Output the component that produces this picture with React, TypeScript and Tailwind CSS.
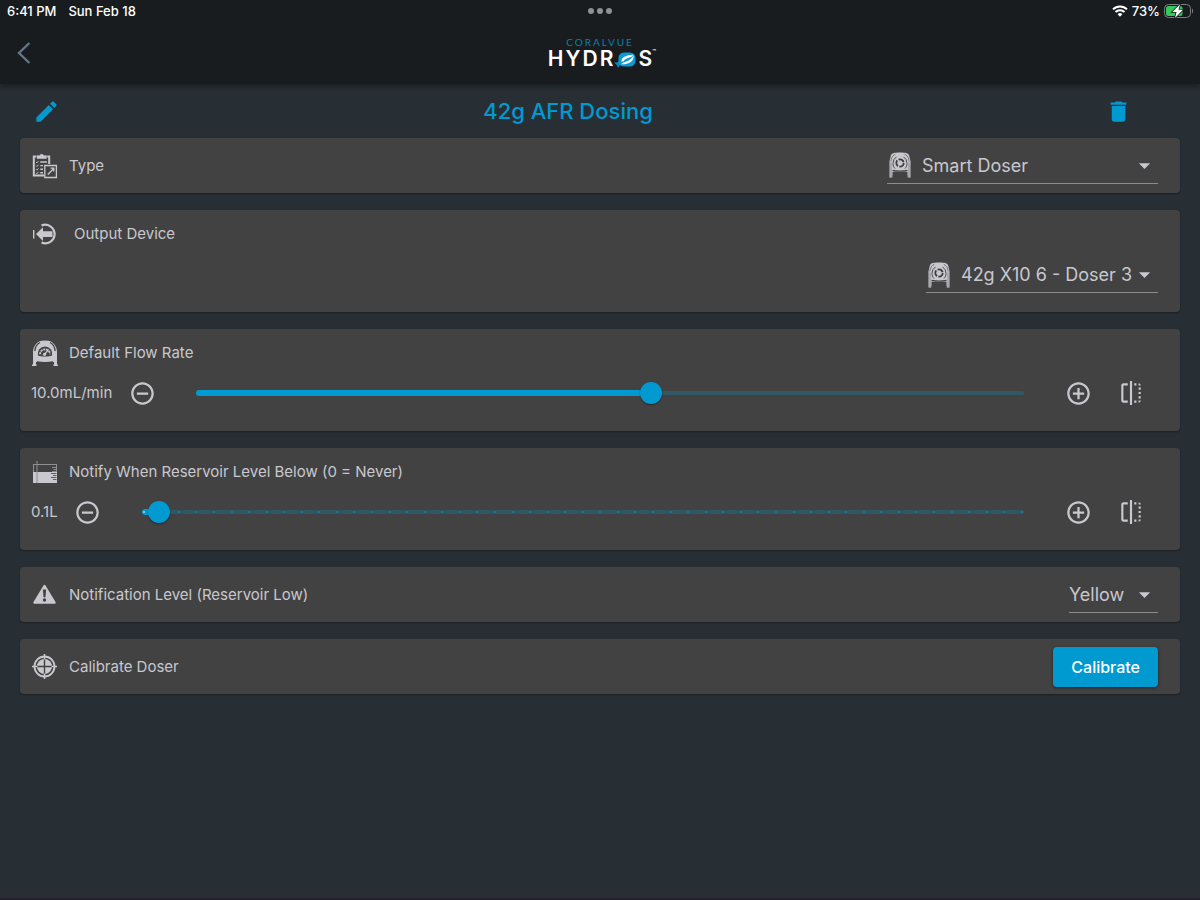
import React, { useId, useState } from 'react';
import {
  MdAddCircleOutline,
  MdArrowDropDown,
  MdDelete,
  MdEdit,
  MdFlip,
  MdRemoveCircleOutline,
} from 'react-icons/md';

function WifiIcon() {
  return (
    <svg width="16" height="12" viewBox="0 0 16 12" fill="none" stroke="#fff" strokeWidth="2">
      <path d="M1 4.4a10 10 0 0 1 14 0" />
      <path d="M3.5 7a6.4 6.4 0 0 1 9 0" />
      <path d="M8 11.8 5.6 9.3a3.4 3.4 0 0 1 4.8 0z" fill="#fff" stroke="none" />
    </svg>
  );
}

function BatteryIcon() {
  return (
    <svg width="30" height="14" viewBox="0 0 30 14" fill="none">
      <rect x="0.5" y="0.5" width="26" height="13" rx="4" stroke="#7b7f81" />
      <path d="M28 4.6c1.4.5 1.4 4.3 0 4.8z" fill="#7b7f81" />
      <rect x="2" y="2" width="16.5" height="10" rx="2.5" fill="#34c759" />
      <path
        d="M16 .3 8.300 8h4.200l-1.500 6 8-8.200h-4.500z"
        fill="#fff"
        stroke="#181c1e"
        strokeWidth="1.6"
        paintOrder="stroke"
      />
    </svg>
  );
}

function BackIcon() {
  return (
    <svg width="14" height="22" viewBox="0 0 14 22" fill="none" stroke="#64758b" strokeWidth="2.4">
      <path d="M12.4 1 2 11l10.4 10" />
    </svg>
  );
}

function ClipboardIcon() {
  return (
    <svg width="26" height="26" viewBox="0 0 26 26" fill="none" stroke="currentColor">
      <path d="M12 22.500H1.800V3.500h15.400v7.500" strokeWidth="2" />
      <path d="M4.200 2.300h11v3.900h-11z" fill="#424242" stroke="none" />
      <path d="M5 5.400V2.800h2.600a2.200 2.200 0 0 1 4.200 0h2.600v2.600z" fill="currentColor" strokeWidth="0.6" />
      <path d="m4 9 .9.9 1.500-1.700M4 12.600l.9.9 1.500-1.700M4 16.200l.9.9 1.500-1.700M4 19.800l.9.9 1.500-1.700" strokeWidth="0.9" />
      <path d="M8.300 9h6.700M8.300 12.600h2.700M8.300 16.200h2.700M8.300 19.800h2.700" strokeWidth="1.4" />
      <path d="M12.800 12.500h11.600v12H12.800z" strokeWidth="1.300" />
      <path d="m15.800 21.500 6-6M18.500 15.200h3.300v3.300" strokeWidth="1.300" />
    </svg>
  );
}

function OutputIcon() {
  return (
    <svg width="26" height="26" viewBox="0 0 26 26" fill="none" stroke="currentColor">
      <path d="M1.7 9v8.5" strokeWidth="1.4" />
      <path d="M9.5 4.600a9.300 9.300 0 1 1 0 17" strokeWidth="2.200" />
      <path d="m4 13.100 7-6.800v4h9.500v5.600H11v4z" fill="currentColor" stroke="none" />
    </svg>
  );
}

function DoserIcon() {
  return (
    <svg width="24" height="26" viewBox="0 0 24 26" fill="none">
      <path d="M3 3C4 1 6 .4 12 .4S20 1 21 3l1.500 6v16.500h-3V20h-15v5.500h-3V9z" fill="currentColor" />
      <path d="M2.800 9.500C3.300 5.500 4.800 3.300 7.300 2.300M21.200 9.500c-.5-4-2-6.200-4.500-7.200" stroke="#5a5a5e" strokeWidth="0.8" />
      <path d="M3 25V10.500M21 25V10.500" stroke="#77777b" strokeWidth="0.8" />
      <path d="M8.500 4.800A8 8 0 0 0 5 11.500c0 2 .7 3.600 2 5M15.500 4.800a8 8 0 0 1 3.500 6.700c0 2-.7 3.600-2 5" stroke="#4a4a4c" strokeWidth="1" />
      <circle cx="12" cy="11" r="3.700" stroke="#3c3c3e" strokeWidth="1.800" strokeDasharray="6.300 1.450" />
      <path d="M4.500 18.500q7.500 1.400 15 0" stroke="#424242" strokeWidth="1.300" />
      <path d="M5.500 23.500v-2h13v2z" fill="#424242" />
      <path d="M4.500 23.500h15V26h-15z" fill="#424242" />
    </svg>
  );
}

function FlowRateIcon() {
  return (
    <svg width="26" height="26" viewBox="0 0 26 26" fill="none">
      <path d="M4 4C6 1.300 8.500.4 13 .4s7 .9 9 3.600C24 6.500 25 9 25 12v12.500h1V26h-4.500v-1.500h.5V22H4v2.500h.5V26H0v-1.500h1V12c0-3 1-5.500 3-8z" fill="currentColor" />
      <path d="M2.800 11C3.200 6.800 5 4 8 2.500M23.200 11C22.800 6.800 21 4 18 2.500" stroke="#424242" strokeWidth="1.300" />
      <path d="M6 15.500a7.200 7.200 0 1 1 14 0c-3 1.300-11 1.300-14 0z" fill="#424242" />
      <path d="M8 14.300a5 5 0 0 1 10 0" stroke="currentColor" strokeWidth="1.800" strokeDasharray="2.200 .7" />
      <path d="m12.500 14.500 4-5" stroke="currentColor" strokeWidth="1.300" />
      <circle cx="12.500" cy="14.300" r="1.600" fill="currentColor" />
      <path d="M5 22v-.8c5 1 11 1 16 0v.8z" fill="#424242" />
    </svg>
  );
}

function ReservoirIcon() {
  return (
    <svg width="26" height="24" viewBox="0 0 26 24" fill="none">
      <rect x="1.500" y="4.500" width="23" height="18" stroke="#8d8d92" />
      <rect x="1" y="12" width="24" height="11" fill="currentColor" />
      <path d="M5 1v22" stroke="#8d8d92" strokeWidth="1" />
      <path d="M24.500 7.500H20M24.500 9.500h-3M24.500 11.500H20" stroke="#8d8d92" />
      <path d="M24.500 13.500h-5.500M24.500 15.500h-3.500M24.500 17.500h-5.500M24.500 19.500h-3.500" stroke="#606064" />
    </svg>
  );
}

function WarningIcon() {
  return (
    <svg width="26" height="24" viewBox="0 0 26 24" fill="none">
      <path d="M12.500 3 2.500 19.500h20z" fill="currentColor" stroke="currentColor" strokeWidth="2.400" strokeLinejoin="round" />
      <path d="M10.900 6.500h3.200l-.6 7.800h-2z" fill="#424242" />
      <circle cx="12.500" cy="17" r="1.700" fill="#424242" />
    </svg>
  );
}

function TargetIcon() {
  return (
    <svg width="26" height="26" viewBox="0 0 26 26" fill="none" stroke="currentColor">
      <circle cx="12.500" cy="12.500" r="10" strokeWidth="1.800" />
      <circle cx="12.500" cy="12.500" r="7.600" fill="currentColor" stroke="none" />
      <path d="M12.500 5v15M5 12.500h15" stroke="#424242" strokeWidth="1.400" />
      <path d="M12.500 0v5.500M12.500 19.500V25M0 12.500h5.500M19.500 12.500H25" strokeWidth="1.600" />
    </svg>
  );
}

function Logo() {
  return (
    <div className="flex flex-col items-center gap-0.5" aria-label="CoralVue Hydros">
      <span className="font-['Lato'] text-[10px] leading-[10px] tracking-[2px] text-[#0c7fae]">CORALVUE</span>
      <div className="flex items-center text-[21px] leading-5 font-semibold text-white">
        <span className="tracking-widest">HYDR</span>
        <svg width="23" height="17" viewBox="0 0 22 17" fill="none" className="-ml-0.5">
          <path d="M0 11.500c1.800.3 3-.2 4.200-1.200l2 3.400c-1 .4-1.800 1.400-2.200 3-.9-.8-1.500-1.600-1.600-2.800C1.300 13.400.5 12.600 0 11.500z" fill="#0a86ba" />
          <rect x="4" y="1.500" width="17" height="14" rx="5.500" fill="#0b9ad6" />
          <path d="M7 10.800C6.500 6.500 11.500 4 19 3.800c-1 1.700-2.500 2.300-4.800 3-2.700.8-4.200 1.700-5 3.500z" fill="#fff" />
          <path d="M19 4.500c.5 5.500-4 9-12.500 8.800 1-1.300 2.800-2 4.600-2.600C15 9.600 17 7.500 19 4.500z" fill="#fff" />
        </svg>
        <span className="relative ml-0.5">
          S
          <span className="absolute top-0 left-full text-[6px] leading-none">™</span>
        </span>
      </div>
    </div>
  );
}

function Card({ children, tall = false }: { children: React.ReactNode; tall?: boolean }) {
  return (
    <section
      className={`rounded bg-[#424242] shadow-[0_1px_2px_rgba(0,0,0,0.35)] ${
        tall ? 'h-[102px] pt-2' : 'flex h-[55px] items-center justify-between pr-[22px]'
      }`}
    >
      {children}
    </section>
  );
}

interface LabelProps {
  icon: React.ReactNode;
  text: string;
  htmlFor: string;
  wide?: boolean;
}

function Label({ icon, text, htmlFor, wide = false }: LabelProps) {
  return (
    <label htmlFor={htmlFor} className={`flex h-8 items-center pl-3 text-[15px] ${wide ? 'gap-4' : 'gap-[11px]'}`}>
      <span className="flex w-[26px] justify-center">{icon}</span>
      <span className="pt-px">{text}</span>
    </label>
  );
}

interface DropdownProps {
  id: string;
  options: string[];
  icon?: React.ReactNode;
  width: string;
}

function Dropdown({ id, options, icon, width }: DropdownProps) {
  return (
    <div className={`relative flex h-9 items-center gap-2.5 border-b border-[#8c8c8e] ${icon ? 'pl-px' : ''} ${width}`}>
      {icon}
      <select
        id={id}
        className="h-9 min-w-0 flex-1 cursor-pointer appearance-none bg-transparent pt-px pr-6 text-lg outline-none"
      >
        {options.map((option) => (
          <option key={option} className="bg-[#424242]">{option}</option>
        ))}
      </select>
      <MdArrowDropDown size={27} className="pointer-events-none absolute right-0" />
    </div>
  );
}

interface SliderRowProps {
  id: string;
  unit: string;
  initial: number;
  max: number;
  step: number;
  ticks?: number;
}

function SliderRow({ id, unit, initial, max, step, ticks = 0 }: SliderRowProps) {
  const [value, setValue] = useState(initial);
  const percent = (value / max) * 100;
  const change = (delta: number) => setValue(Math.min(max, Math.max(0, value + delta)));

  return (
    <div className="flex h-12 items-center pr-[25px] pl-[11px]">
      <output htmlFor={id} className="pt-px text-[15px]">{value.toFixed(1)}{unit}</output>
      <button type="button" aria-label="Decrease" onClick={() => change(-step)} className="ml-1.5 flex size-12 items-center justify-center">
        <MdRemoveCircleOutline size={27} />
      </button>
      <div className="relative mx-[30px] flex h-6 flex-1 items-center">
        <div className="h-1 w-full rounded-full bg-[#0099d0]/25" />
        <div className="absolute left-0 h-1.5 rounded-full bg-[#0099d0]" style={{ width: `${percent}%` }} />
        {ticks > 0 && (
          <div className="absolute inset-x-px flex justify-between">
            {Array.from({ length: ticks }, (_, i) => (
              <span key={i} className={`size-0.5 rounded-full ${i === 0 ? 'bg-[#9edcf2]' : 'bg-[#0c7fa8]'}`} />
            ))}
          </div>
        )}
        <input
          id={id}
          type="range"
          min={0}
          max={max}
          step={step}
          value={value}
          onChange={(e) => setValue(Number(e.target.value))}
          className="absolute -left-[11px] h-6 w-[calc(100%+22px)] cursor-pointer appearance-none bg-transparent outline-none [&::-webkit-slider-thumb]:size-[22px] [&::-webkit-slider-thumb]:appearance-none [&::-webkit-slider-thumb]:rounded-full [&::-webkit-slider-thumb]:bg-[#0099d0] [&::-webkit-slider-thumb]:shadow-[0_1px_2px_rgba(0,0,0,0.4)]"
        />
      </div>
      <button type="button" aria-label="Increase" onClick={() => change(step)} className="flex size-12 items-center justify-center">
        <MdAddCircleOutline size={27} />
      </button>
      <button type="button" aria-label="Reset" onClick={() => setValue(initial)} className="ml-[5px] flex size-12 items-center justify-center">
        <MdFlip size={26} />
      </button>
    </div>
  );
}

export default function App() {
  const id = useId();

  return (
    <div className="min-h-screen border-b-2 border-[#241f2b] bg-[#272f35] font-['Inter',sans-serif] text-[#c9c8ce]">
      <header className="relative h-[84px] bg-[#181c1e] shadow-[0_2px_6px_rgba(0,0,0,0.45)]">
        <div className="grid h-[22px] grid-cols-3 items-center pr-1.5 pl-[7px] text-[13px] font-medium text-white">
          <div className="flex gap-3 pt-0.5">
            <span>6:41 PM</span>
            <span>Sun Feb 18</span>
          </div>
          <div className="flex justify-center gap-[3px]">
            <span className="size-1.5 rounded-full bg-[#8f9293]" />
            <span className="size-1.5 rounded-full bg-[#8f9293]" />
            <span className="size-1.5 rounded-full bg-[#8f9293]" />
          </div>
          <div className="flex items-center justify-end gap-1">
            <WifiIcon />
            <span className="pt-0.5">73%</span>
            <BatteryIcon />
          </div>
        </div>
        <div className="grid h-[62px] grid-cols-3 items-center">
          <button type="button" aria-label="Back" className="flex size-12 items-center justify-center">
            <BackIcon />
          </button>
          <Logo />
        </div>
      </header>

      <main className="px-5">
        <div className="flex h-[54px] items-center text-[#0099d0]">
          <button type="button" aria-label="Edit name" className="flex w-[52px] justify-center">
            <MdEdit size={27} />
          </button>
          <h1 className="flex-1 text-center text-[22px] font-medium">42g AFR Dosing</h1>
          <div className="flex w-[116px] justify-end pr-[38px]">
            <button type="button" aria-label="Delete" className="flex w-12 justify-center">
              <MdDelete size={27} />
            </button>
          </div>
        </div>

        <div className="flex flex-col gap-[17px]">
          <Card>
            <Label icon={<ClipboardIcon />} text="Type" htmlFor={`${id}-type`} />
            <Dropdown id={`${id}-type`} options={['Smart Doser']} icon={<DoserIcon />} width="w-[271px]" />
          </Card>

          <Card tall>
            <Label icon={<OutputIcon />} text="Output Device" htmlFor={`${id}-output`} wide />
            <div className="mt-[7px] flex justify-end pr-[22px]">
              <Dropdown id={`${id}-output`} options={['42g X10 6 - Doser 3']} icon={<DoserIcon />} width="w-[232px]" />
            </div>
          </Card>

          <Card tall>
            <Label icon={<FlowRateIcon />} text="Default Flow Rate" htmlFor={`${id}-flow`} />
            <SliderRow id={`${id}-flow`} unit="mL/min" initial={10} max={18.2} step={0.1} />
          </Card>

          <Card tall>
            <Label icon={<ReservoirIcon />} text="Notify When Reservoir Level Below (0 = Never)" htmlFor={`${id}-level`} />
            <SliderRow id={`${id}-level`} unit="L" initial={0.1} max={5} step={0.1} ticks={51} />
          </Card>

          <Card>
            <Label icon={<WarningIcon />} text="Notification Level (Reservoir Low)" htmlFor={`${id}-notify`} />
            <Dropdown id={`${id}-notify`} options={['Yellow', 'Orange', 'Red']} width="w-[89px]" />
          </Card>

          <Card>
            <Label icon={<TargetIcon />} text="Calibrate Doser" htmlFor={`${id}-calibrate`} />
            <button
              id={`${id}-calibrate`}
              type="button"
              className="h-10 rounded bg-[#0099d0] px-[18px] text-base font-medium text-white shadow-[0_1px_3px_rgba(0,0,0,0.5)]"
            >
              Calibrate
            </button>
          </Card>
        </div>
      </main>
    </div>
  );
}
